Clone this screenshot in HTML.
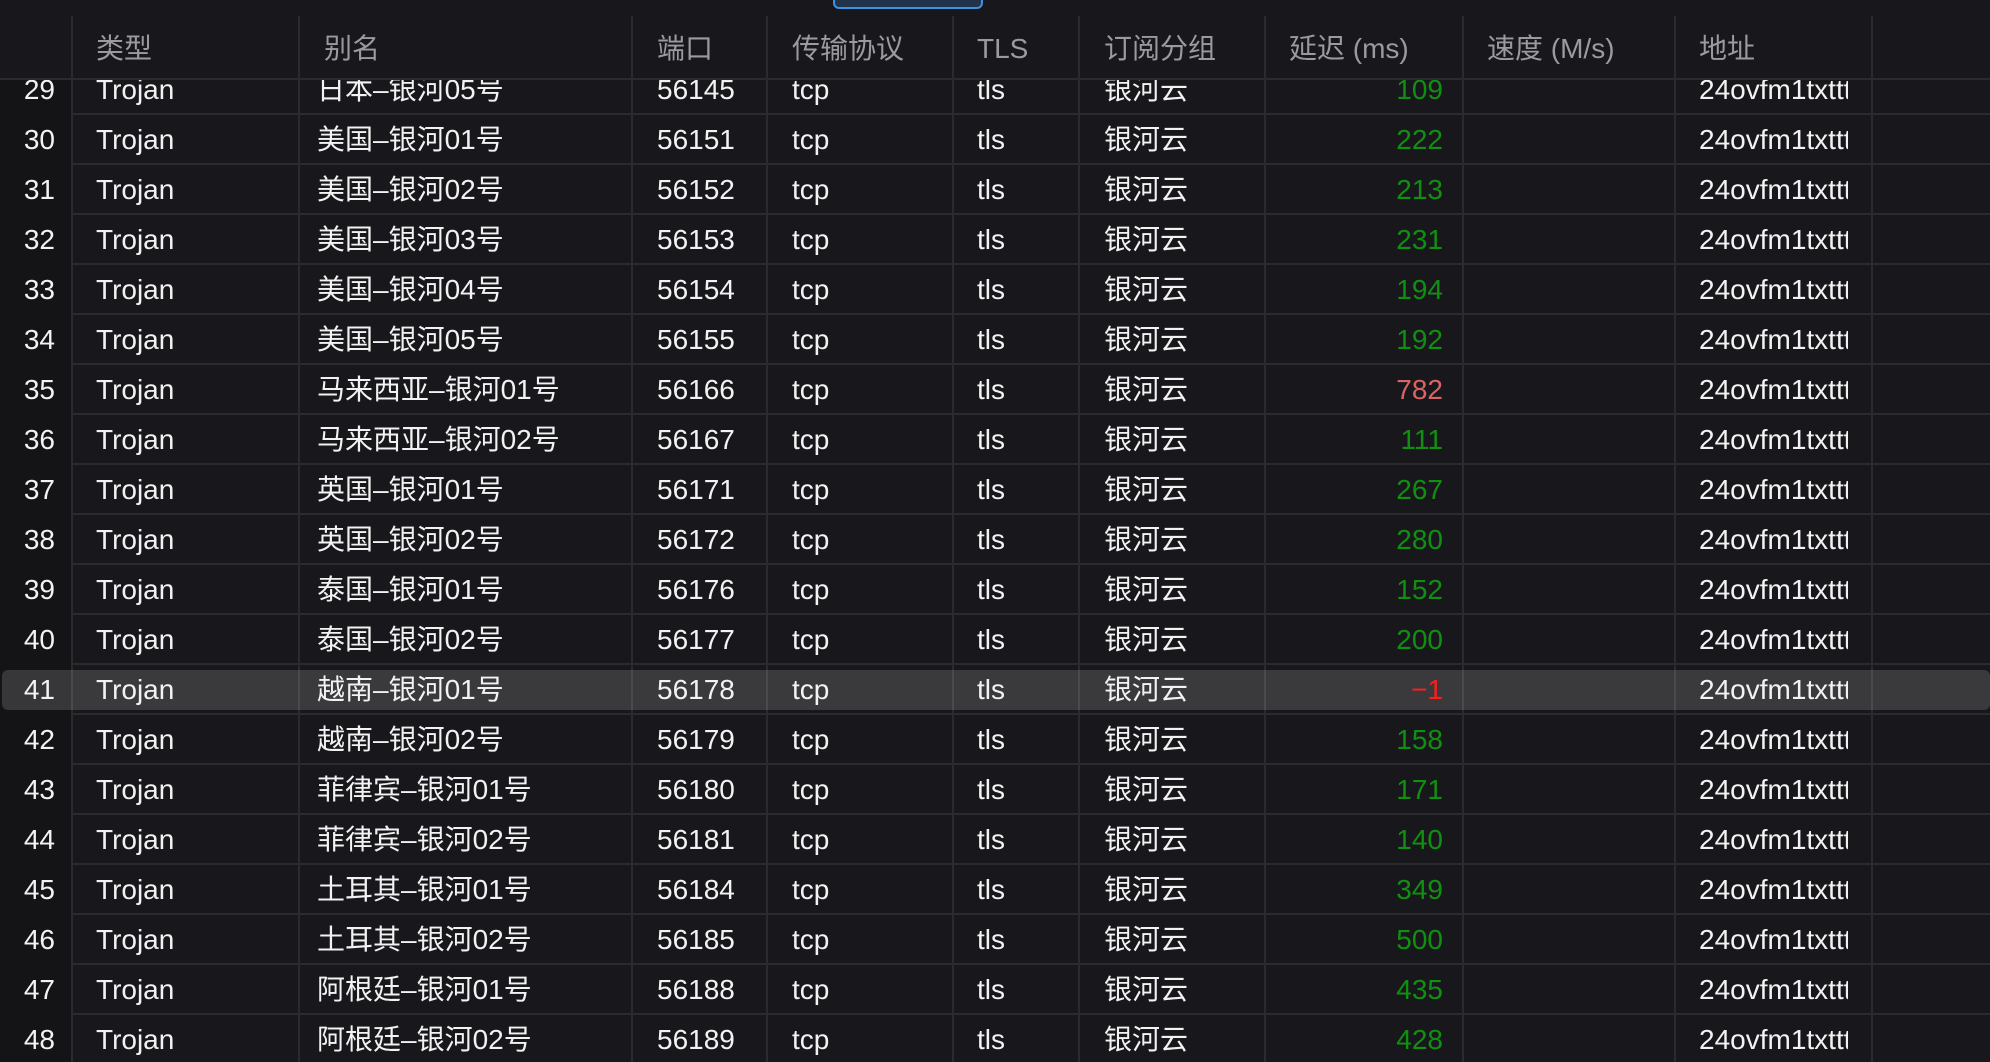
<!DOCTYPE html>
<html><head><meta charset="utf-8"><style>
html,body{margin:0;padding:0;width:1990px;height:1062px;overflow:hidden;background:#18181c;}
body{position:relative;font-family:"Liberation Sans","Noto Sans CJK SC",sans-serif;font-size:28px;color:#f2f2f2;}
.num{position:absolute;left:0;top:0;width:72px;height:1062px;background:#141417;}
.vl{position:absolute;top:16px;height:1046px;width:2px;background:#2a2a2f;z-index:4;}
.r{position:absolute;left:0;width:1990px;height:50px;line-height:50px;z-index:2;}
.r:after{content:"";position:absolute;left:72px;right:0;bottom:0;height:2px;background:#2a2a2f;}
.r span{position:absolute;top:0;white-space:nowrap;}
.n{right:1935px;text-align:right;}
.c1{left:96px}.c2{left:317px}.c3{left:657px}.c4{left:792px}.c5{left:977px}.c6{left:1104px}
.c7{right:547px;text-align:right;color:#109010}
.c9{left:1699px;width:149px;overflow:hidden}
.hl{position:absolute;left:2px;right:0;top:670px;height:40px;background:rgba(255,255,255,0.15);border-radius:6px;z-index:5;}
.hd{position:absolute;left:0;top:0;width:1990px;height:78px;background:#18181c;border-bottom:2px solid #2a2a2f;color:#9b9b9e;z-index:3;}
.hd span{position:absolute;top:29px;line-height:40px;white-space:nowrap;}
.blue{position:absolute;left:833px;top:-4px;width:146px;height:9px;background:#22344c;border:2px solid #3f91e2;border-radius:0 0 6px 6px;z-index:6;}
</style></head><body>
<div class="num"></div>
<div class="hl"></div>
<div class="r" style="top:65px"><span class="n">29</span><span class="c1">Trojan</span><span class="c2">日本–银河05号</span><span class="c3">56145</span><span class="c4">tcp</span><span class="c5">tls</span><span class="c6">银河云</span><span class="c7">109</span><span class="c9">24ovfm1txttt</span></div>
<div class="r" style="top:115px"><span class="n">30</span><span class="c1">Trojan</span><span class="c2">美国–银河01号</span><span class="c3">56151</span><span class="c4">tcp</span><span class="c5">tls</span><span class="c6">银河云</span><span class="c7">222</span><span class="c9">24ovfm1txttt</span></div>
<div class="r" style="top:165px"><span class="n">31</span><span class="c1">Trojan</span><span class="c2">美国–银河02号</span><span class="c3">56152</span><span class="c4">tcp</span><span class="c5">tls</span><span class="c6">银河云</span><span class="c7">213</span><span class="c9">24ovfm1txttt</span></div>
<div class="r" style="top:215px"><span class="n">32</span><span class="c1">Trojan</span><span class="c2">美国–银河03号</span><span class="c3">56153</span><span class="c4">tcp</span><span class="c5">tls</span><span class="c6">银河云</span><span class="c7">231</span><span class="c9">24ovfm1txttt</span></div>
<div class="r" style="top:265px"><span class="n">33</span><span class="c1">Trojan</span><span class="c2">美国–银河04号</span><span class="c3">56154</span><span class="c4">tcp</span><span class="c5">tls</span><span class="c6">银河云</span><span class="c7">194</span><span class="c9">24ovfm1txttt</span></div>
<div class="r" style="top:315px"><span class="n">34</span><span class="c1">Trojan</span><span class="c2">美国–银河05号</span><span class="c3">56155</span><span class="c4">tcp</span><span class="c5">tls</span><span class="c6">银河云</span><span class="c7">192</span><span class="c9">24ovfm1txttt</span></div>
<div class="r" style="top:365px"><span class="n">35</span><span class="c1">Trojan</span><span class="c2">马来西亚–银河01号</span><span class="c3">56166</span><span class="c4">tcp</span><span class="c5">tls</span><span class="c6">银河云</span><span class="c7" style="color:#d86464">782</span><span class="c9">24ovfm1txttt</span></div>
<div class="r" style="top:415px"><span class="n">36</span><span class="c1">Trojan</span><span class="c2">马来西亚–银河02号</span><span class="c3">56167</span><span class="c4">tcp</span><span class="c5">tls</span><span class="c6">银河云</span><span class="c7">111</span><span class="c9">24ovfm1txttt</span></div>
<div class="r" style="top:465px"><span class="n">37</span><span class="c1">Trojan</span><span class="c2">英国–银河01号</span><span class="c3">56171</span><span class="c4">tcp</span><span class="c5">tls</span><span class="c6">银河云</span><span class="c7">267</span><span class="c9">24ovfm1txttt</span></div>
<div class="r" style="top:515px"><span class="n">38</span><span class="c1">Trojan</span><span class="c2">英国–银河02号</span><span class="c3">56172</span><span class="c4">tcp</span><span class="c5">tls</span><span class="c6">银河云</span><span class="c7">280</span><span class="c9">24ovfm1txttt</span></div>
<div class="r" style="top:565px"><span class="n">39</span><span class="c1">Trojan</span><span class="c2">泰国–银河01号</span><span class="c3">56176</span><span class="c4">tcp</span><span class="c5">tls</span><span class="c6">银河云</span><span class="c7">152</span><span class="c9">24ovfm1txttt</span></div>
<div class="r" style="top:615px"><span class="n">40</span><span class="c1">Trojan</span><span class="c2">泰国–银河02号</span><span class="c3">56177</span><span class="c4">tcp</span><span class="c5">tls</span><span class="c6">银河云</span><span class="c7">200</span><span class="c9">24ovfm1txttt</span></div>
<div class="r" style="top:665px;z-index:7"><span class="n">41</span><span class="c1">Trojan</span><span class="c2">越南–银河01号</span><span class="c3">56178</span><span class="c4">tcp</span><span class="c5">tls</span><span class="c6">银河云</span><span class="c7" style="color:#ff1c1c">−1</span><span class="c9">24ovfm1txttt</span></div>
<div class="r" style="top:715px"><span class="n">42</span><span class="c1">Trojan</span><span class="c2">越南–银河02号</span><span class="c3">56179</span><span class="c4">tcp</span><span class="c5">tls</span><span class="c6">银河云</span><span class="c7">158</span><span class="c9">24ovfm1txttt</span></div>
<div class="r" style="top:765px"><span class="n">43</span><span class="c1">Trojan</span><span class="c2">菲律宾–银河01号</span><span class="c3">56180</span><span class="c4">tcp</span><span class="c5">tls</span><span class="c6">银河云</span><span class="c7">171</span><span class="c9">24ovfm1txttt</span></div>
<div class="r" style="top:815px"><span class="n">44</span><span class="c1">Trojan</span><span class="c2">菲律宾–银河02号</span><span class="c3">56181</span><span class="c4">tcp</span><span class="c5">tls</span><span class="c6">银河云</span><span class="c7">140</span><span class="c9">24ovfm1txttt</span></div>
<div class="r" style="top:865px"><span class="n">45</span><span class="c1">Trojan</span><span class="c2">土耳其–银河01号</span><span class="c3">56184</span><span class="c4">tcp</span><span class="c5">tls</span><span class="c6">银河云</span><span class="c7">349</span><span class="c9">24ovfm1txttt</span></div>
<div class="r" style="top:915px"><span class="n">46</span><span class="c1">Trojan</span><span class="c2">土耳其–银河02号</span><span class="c3">56185</span><span class="c4">tcp</span><span class="c5">tls</span><span class="c6">银河云</span><span class="c7">500</span><span class="c9">24ovfm1txttt</span></div>
<div class="r" style="top:965px"><span class="n">47</span><span class="c1">Trojan</span><span class="c2">阿根廷–银河01号</span><span class="c3">56188</span><span class="c4">tcp</span><span class="c5">tls</span><span class="c6">银河云</span><span class="c7">435</span><span class="c9">24ovfm1txttt</span></div>
<div class="r" style="top:1015px"><span class="n">48</span><span class="c1">Trojan</span><span class="c2">阿根廷–银河02号</span><span class="c3">56189</span><span class="c4">tcp</span><span class="c5">tls</span><span class="c6">银河云</span><span class="c7">428</span><span class="c9">24ovfm1txttt</span></div>
<div class="hd"><span style="left:96px">类型</span><span style="left:324px">别名</span><span style="left:657px">端口</span><span style="left:792px">传输协议</span><span style="left:977px">TLS</span><span style="left:1104px">订阅分组</span><span style="left:1289px">延迟 (ms)</span><span style="left:1487px">速度 (M/s)</span><span style="left:1699px">地址</span></div>
<div class="blue"></div>
<div class="vl" style="left:71px"></div>
<div class="vl" style="left:298px"></div>
<div class="vl" style="left:631px"></div>
<div class="vl" style="left:766px"></div>
<div class="vl" style="left:952px"></div>
<div class="vl" style="left:1078px"></div>
<div class="vl" style="left:1264px"></div>
<div class="vl" style="left:1462px"></div>
<div class="vl" style="left:1674px"></div>
<div class="vl" style="left:1871px"></div>
</body></html>
